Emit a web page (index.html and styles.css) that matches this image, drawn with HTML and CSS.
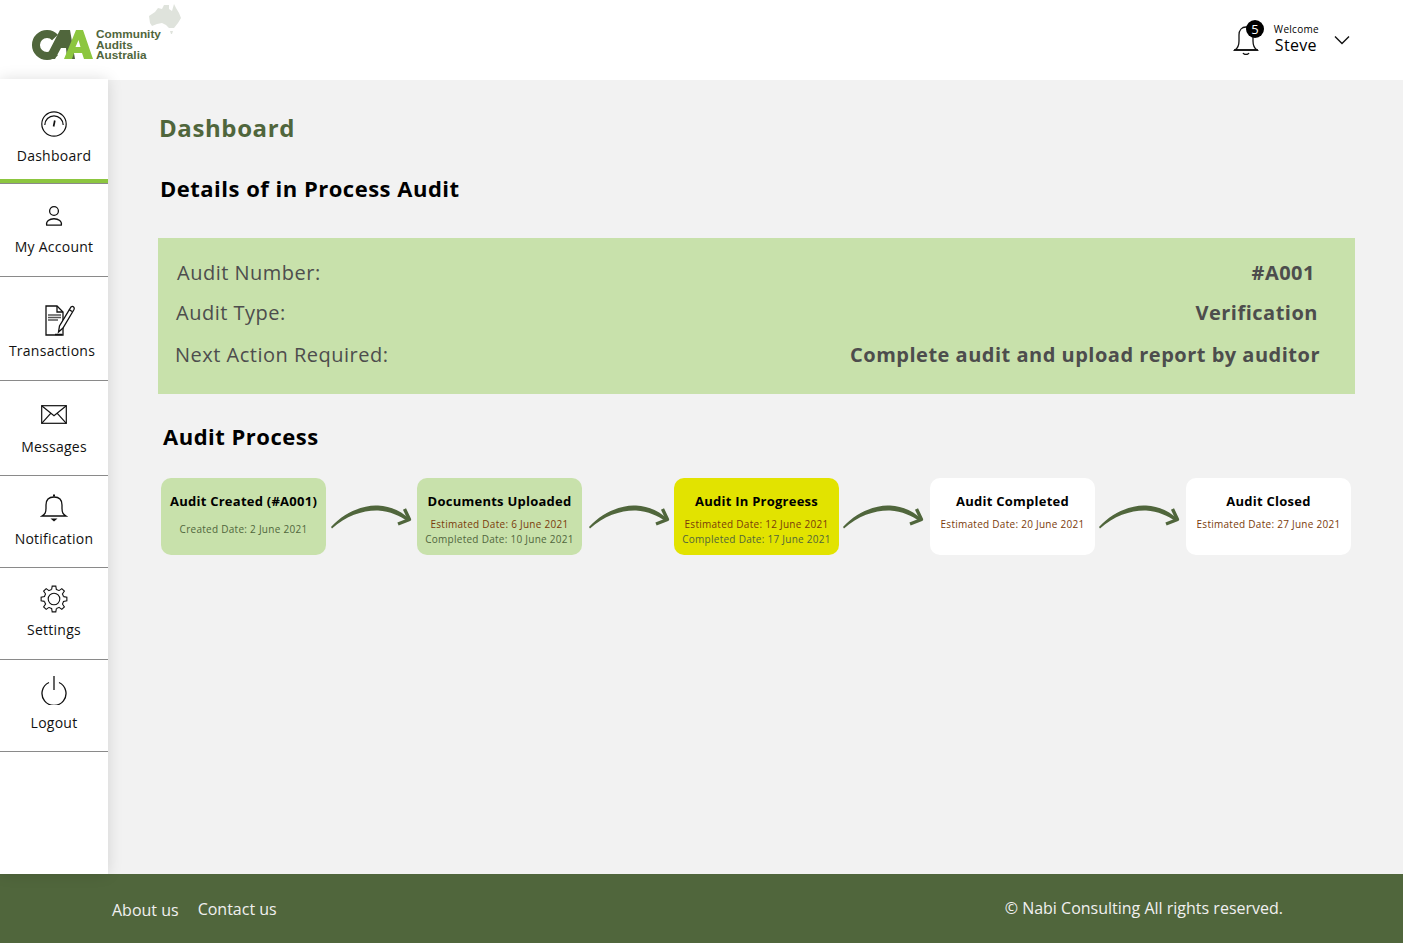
FILE: index.html
```html
<!DOCTYPE html>
<html>

<head>
	<meta charset="utf-8">
	<title>Dashboard</title>
	<link rel="stylesheet" href="styles.css">
</head>

<body>
	<svg class="defs" width="0" height="0">
		<defs>
			<g id="arrow-shape">
				<path class="arrow-body" d="M5 27C18 12.500 38 4.500 52 5.500C65 6 76 12 83 18.500L82 21.500C74 16 64 11 52 10.500C38 10 20 15.500 6 28.500z"/>
				<path class="arrow-head" d="M78.500 9 83.500 19.500 72 24"/>
			</g>
			<path id="gear-tooth" d="M11.630 4.490L12.190 1.130H15.810L16.370 4.490A9.800 9.800 0 0 1 19.050 5.600"/>
		</defs>
	</svg>
	<div class="page">
		<header class="topbar">
			<div class="logo">
				<svg class="logo-mark" width="190" height="70" viewBox="0 0 190 70">
					<!-- map -->
					<path d="M150 16L156 12L159 8L163 9L165 5L170 5L170 9L173 11L175 4L177 8L180 13L182 18L179 23L175 28L170 28L167 25L163 23L158 24L153 26L151 23z" fill="#dfe3dc"/>
					<path d="M171 31h3l-1 3h-1z" fill="#dfe3dc"/>
					<!-- CAA mark -->
					<path d="M56 37.500A11 11 0 1 0 56 52.500" fill="none" stroke="#50663c" stroke-width="8"/>
					<path d="M46 59L61 30H71L76 59H68L67 48H62L56 59z" fill="#50663c"/>
					<path fill-rule="evenodd" d="M65 59L77 30H84L94 59H85L83 53H75L73 59zM76.500 47H81.500L79.500 40z" fill="#8cc63f"/>
				</svg>
				<div class="logo-text">Community<br>Audits<br>Australia</div>
			</div>
			<div class="user">
				<div class="bell-wrap">
					<svg width="28" height="34" viewBox="0 0 28 34" fill="none" stroke="#111" stroke-width="1.300">
						<path d="M2 29c3-2 4-4 4-9v-6c0-5 3-8 7-8s7 3 7 8v6c0 5 1 7 4 9z"/>
						<path d="M1 29h24" stroke-width="1.600"/>
						<path d="M10 32c1 2 5 2 6 0"/>
					</svg>
					<span class="badge">5</span>
				</div>
				<div class="welcome">
					<span class="welcome-small">Welcome</span>
					<span class="welcome-name">Steve</span>
				</div>
				<svg class="chevron" width="16" height="10" viewBox="0 0 16 10" fill="none" stroke="#111" stroke-width="1.400">
					<path d="M1 1.500l7 7 7-7"/>
				</svg>
			</div>
		</header>

		<div class="middle">
			<nav class="sidebar">
				<a class="nav-item nav-dashboard">
					<svg width="28" height="28" viewBox="0 0 28 28" fill="none" stroke="#111" stroke-width="1.200">
						<circle cx="14" cy="14" r="12.200"/>
						<path d="M4.800 15a9.200 9.200 0 0 1 18.400 0"/>
						<path d="M14.800 10.500l-1.200 6" stroke-width="1.700"/>
					</svg>
					<span>Dashboard</span>
				</a>
				<a class="nav-item nav-account">
					<svg width="20" height="22" viewBox="0 0 20 24" fill="none" stroke="#111" stroke-width="1.400">
						<circle cx="10" cy="6.500" r="4.800"/>
						<path d="M2 22c-1-4 3-7 8-7s9 3 8 7z"/>
					</svg>
					<span>My Account</span>
				</a>
				<a class="nav-item nav-trans">
					<svg class="trans-icon" width="32" height="32" viewBox="0 0 32 32" fill="none" stroke="#111" stroke-width="1.300">
						<path d="M2 1H13L19 7V30H2z"/>
						<path d="M13 1V7H19"/>
						<path d="M4 10H17M4 12.500H17M4 15H14" stroke="#555" stroke-width="1.500"/>
						<path d="M27 2C29 0.500 31 2.500 30 4.500L19 23L14.500 27L15.500 21z" fill="#fff"/>
						<path d="M25 4.500L28 6.500M11 29.500H18" stroke-width="1.500"/>
					</svg>
					<span>Transactions</span>
				</a>
				<a class="nav-item nav-msg">
					<svg width="26" height="19" viewBox="0 0 26 19" fill="none" stroke="#111" stroke-width="1.200">
						<rect x=".7" y=".7" width="24.600" height="17.600"/>
						<path d="M.7 .7l12.300 10 12.300-10M.7 18.300l9-10M25.300 18.300l-9-10"/>
					</svg>
					<span>Messages</span>
				</a>
				<a class="nav-item nav-notif">
					<svg width="28" height="30" viewBox="0 0 28 30" fill="none" stroke="#111" stroke-width="1.300">
						<path d="M2 23c3-2 4-3 4-8v-3c0-5 3-8 8-8s8 3 8 8v3c0 5 1 6 4 8z"/>
						<path d="M13 2.500h2" stroke-width="2"/>
						<path d="M10.500 25.500h7l-3.500 3z" fill="#111" stroke="none"/>
					</svg>
					<span>Notification</span>
				</a>
				<a class="nav-item nav-settings">
					<svg width="28" height="28" viewBox="0 0 28 28" fill="none" stroke="#111" stroke-width="1.100">
						<circle cx="14" cy="14" r="5.800"/>
						<use href="#gear-tooth"/>
						<use href="#gear-tooth" transform="rotate(45 14 14)"/>
						<use href="#gear-tooth" transform="rotate(90 14 14)"/>
						<use href="#gear-tooth" transform="rotate(135 14 14)"/>
						<use href="#gear-tooth" transform="rotate(180 14 14)"/>
						<use href="#gear-tooth" transform="rotate(225 14 14)"/>
						<use href="#gear-tooth" transform="rotate(270 14 14)"/>
						<use href="#gear-tooth" transform="rotate(315 14 14)"/>
					</svg>
					<span>Settings</span>
				</a>
				<a class="nav-item nav-logout">
					<svg width="26" height="30" viewBox="0 0 26 30" fill="none" stroke="#111" stroke-width="1.300">
						<path d="M8 7.500a12 12 0 1 0 10 0"/>
						<path d="M13 1v14"/>
					</svg>
					<span>Logout</span>
				</a>
			</nav>

			<main class="content">
				<h1 class="page-title">Dashboard</h1>
				<h2 class="section-title">Details of in Process Audit</h2>

				<section class="details">
					<div class="detail-row row-number">
						<span class="detail-label">Audit Number:</span>
						<span class="detail-value">#A001</span>
					</div>
					<div class="detail-row row-type">
						<span class="detail-label">Audit Type:</span>
						<span class="detail-value">Verification</span>
					</div>
					<div class="detail-row row-action">
						<span class="detail-label">Next Action Required:</span>
						<span class="detail-value">Complete audit and upload report by auditor</span>
					</div>
				</section>

				<h2 class="process-title">Audit Process</h2>

				<section class="process">
					<div class="step step-done">
						<h3>Audit Created (#A001)</h3>
						<p class="date-completed created">Created Date: 2 June 2021</p>
					</div>
					<svg class="arrow" viewBox="0 0 91 32"><use href="#arrow-shape"/></svg>
					<div class="step step-done">
						<h3>Documents Uploaded</h3>
						<p class="date-estimated">Estimated Date: 6 June 2021</p>
						<p class="date-completed">Completed Date: 10 June 2021</p>
					</div>
					<svg class="arrow arrow-right" viewBox="0 0 91 32"><use href="#arrow-shape"/></svg>
					<div class="step step-active">
						<h3>Audit In Progreess</h3>
						<p class="date-estimated">Estimated Date: 12 June 2021</p>
						<p class="date-completed">Completed Date: 17 June 2021</p>
					</div>
					<svg class="arrow arrow-left" viewBox="0 0 91 32"><use href="#arrow-shape"/></svg>
					<div class="step">
						<h3>Audit Completed</h3>
						<p class="date-estimated">Estimated Date: 20 June 2021</p>
					</div>
					<svg class="arrow arrow-left" viewBox="0 0 91 32"><use href="#arrow-shape"/></svg>
					<div class="step">
						<h3>Audit Closed</h3>
						<p class="date-estimated">Estimated Date: 27 June 2021</p>
					</div>
				</section>
			</main>
		</div>

		<footer class="footer">
			<div class="footer-links">
				<a class="link-about">About us</a>
				<a class="link-contact">Contact us</a>
			</div>
			<div class="copyright">© Nabi Consulting All rights reserved.</div>
		</footer>
	</div>
</body>

</html>
```

FILE: styles.css
```css
html, body {
	margin: 0;
	padding: 0;
}

body {
	font-family: "Open Sans", sans-serif;
	color: #000;
	background: #f2f2f2;
}

.defs {
	position: absolute;
}

.page {
	display: flex;
	flex-direction: column;
	height: 943px;
	overflow: hidden;
}

/* Top bar */

.topbar {
	display: flex;
	justify-content: space-between;
	height: 80px;
	background: #fff;
	flex: none;
}

.logo {
	position: relative;
	width: 190px;
}

.logo-mark {
	position: absolute;
	left: -1px;
	top: 0;
}

.logo-text {
	position: absolute;
	left: 96px;
	top: 29px;
	font-family: "Liberation Sans", sans-serif;
	font-size: 11.8px;
	font-weight: bold;
	line-height: 10.500px;
	color: #50663c;
}

.user {
	display: flex;
	align-items: flex-start;
	padding: 21px 53px 0 0;
}

.bell-wrap {
	position: relative;
	width: 28px;
	height: 34px;
}

.badge {
	position: absolute;
	left: 13px;
	top: -1px;
	width: 18px;
	height: 18px;
	border-radius: 50%;
	background: #000;
	color: #fff;
	font-size: 13px;
	line-height: 18px;
	text-align: center;
}

.welcome {
	display: flex;
	flex-direction: column;
	margin-left: 13px;
	margin-top: 2px;
}

.welcome-small {
	font-size: 10px;
	line-height: 13px;
	letter-spacing: 0.3px;
}

.welcome-name {
	padding-left: 1px;
	font-size: 16px;
	line-height: 18px;
	letter-spacing: 0.3px;
}

.chevron {
	margin-left: 15px;
	margin-top: 14px;
}

/* Sidebar */

.middle {
	display: flex;
	flex: 1;
	min-height: 0;
}

.sidebar {
	position: relative;
	width: 108px;
	flex: none;
	margin-top: -1px;
	background: #fff;
	box-shadow: 0 0 14px rgba(0, 0, 0, 0.13);
}

.nav-item {
	display: flex;
	flex-direction: column;
	align-items: center;
	box-sizing: border-box;
	border-bottom: 1px solid #8a8a8a;
	font-size: 14px;
	line-height: 20px;
	letter-spacing: 0.25px;
	color: #111;
}

.nav-dashboard {
	height: 105px;
	padding-top: 31px;
	box-shadow: inset 0 -4px #8cc63f;
	gap: 8px;
}

.nav-account {
	height: 93px;
	padding-top: 21px;
	gap: 10px;
}

.nav-trans {
	height: 104px;
	padding: 28px 4px 0 0;
	gap: 4px;
}

.trans-icon {
	margin-left: 16px;
}

.nav-msg {
	height: 95px;
	padding-top: 24px;
	gap: 13px;
}

.nav-notif {
	height: 92px;
	padding-top: 17px;
	gap: 6px;
}

.nav-settings {
	height: 92px;
	padding-top: 17px;
	gap: 7px;
}

.nav-logout {
	height: 92px;
	padding-top: 15px;
	gap: 8px;
}

/* Main area */

.content {
	flex: 1;
	min-width: 0;
	padding-left: 50px;
}

.page-title {
	margin: 31px 0 0 1px;
	font-size: 24px;
	line-height: 33px;
	font-weight: 700;
	letter-spacing: 0.6px;
	color: #50663c;
}

.section-title {
	margin: 29px 0 0 2px;
	font-size: 22px;
	line-height: 30px;
	font-weight: 700;
	letter-spacing: 0.5px;
}

.details {
	box-sizing: border-box;
	width: 1197px;
	height: 156px;
	margin-top: 35px;
	padding-top: 20px;
	background: #c8e1ab;
	color: #4d4d4d;
}

.detail-row {
	display: flex;
	justify-content: space-between;
	font-size: 20px;
	line-height: 30px;
	letter-spacing: 0.5px;
}

.detail-value {
	font-weight: 700;
	letter-spacing: 0.5px;
}

.row-number {
	padding: 0 40px 0 19px;
}

.row-type {
	margin-top: 10px;
	padding: 0 37px 0 18px;
}

.row-action {
	margin-top: 12px;
	padding: 0 35px 0 17px;
}

.process-title {
	margin: 27px 0 0 5px;
	font-size: 22px;
	line-height: 30px;
	font-weight: 700;
	letter-spacing: 0.5px;
}

.process {
	display: grid;
	grid-template-columns: 165px 91px 165px 92px 165px 91px 165px 91px 165px;
	margin: 27px 0 0 3px;
}

.step {
	box-sizing: border-box;
	height: 77px;
	padding-top: 14px;
	border-radius: 10px;
	background: #fff;
	text-align: center;
}

.step h3 {
	margin: 0;
	font-size: 13px;
	line-height: 18px;
	font-weight: 700;
	letter-spacing: 0.25px;
}

.step p {
	margin: 0;
	font-size: 10px;
	line-height: 15px;
	letter-spacing: 0.27px;
}

.step-done {
	background: #c8e1ab;
}

.step-active {
	background: #e2e300;
}

.date-estimated {
	padding-top: 7px;
	color: #7a3b0a;
}

.date-completed {
	color: #50663c;
}

.created {
	padding-top: 12px;
}

.arrow {
	width: 91px;
	height: 32px;
	margin-top: 22px;
}

.arrow-right {
	margin-left: 2px;
}

.arrow-left {
	margin-left: -1px;
}

.arrow-body {
	fill: #50663c;
}

.arrow-head {
	fill: none;
	stroke: #50663c;
	stroke-width: 3.400;
	stroke-linejoin: round;
}

/* Footer */

.footer {
	display: flex;
	justify-content: space-between;
	flex: none;
	height: 69px;
	background: #50663c;
	color: #f0f0f0;
	font-size: 16px;
	line-height: 22px;
}

.footer-links {
	display: flex;
	gap: 19px;
	padding: 25px 0 0 112px;
}

.link-contact {
	margin-top: -1px;
}

.copyright {
	padding: 23px 120px 0 0;
}
```
